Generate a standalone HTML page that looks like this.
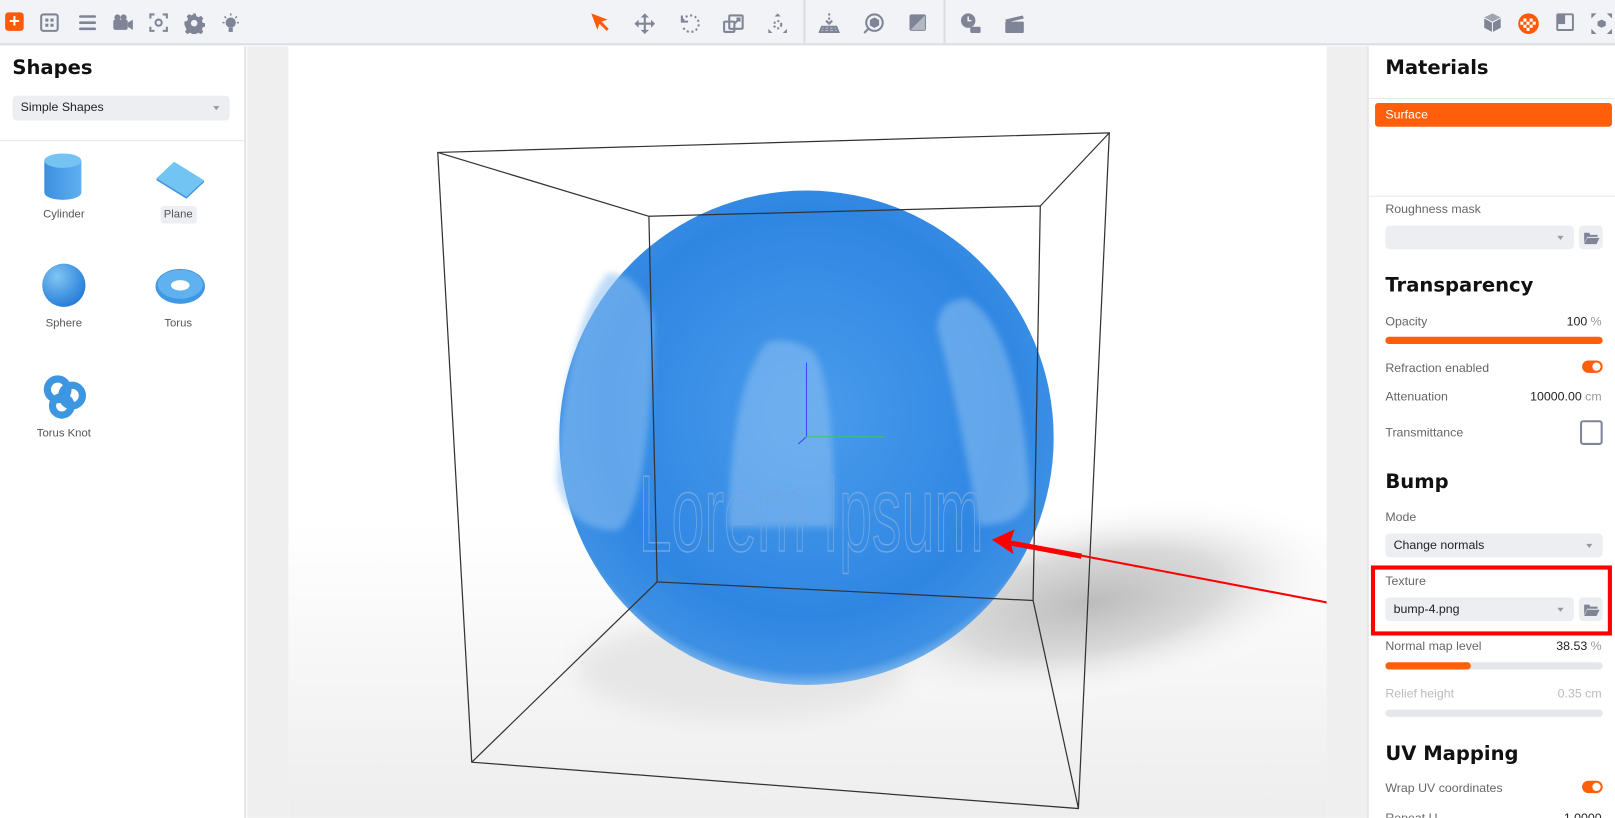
<!DOCTYPE html>
<html><head><meta charset="utf-8"><style>
*{box-sizing:border-box;margin:0;padding:0}
html,body{width:1615px;height:817px;overflow:hidden;background:#fff}
body{font-family:"Liberation Sans",sans-serif;color:#222}
#w{position:absolute;left:0;top:0;width:1568px;height:794px;transform:scale(1.03);transform-origin:0 0;overflow:hidden}
.tb{position:absolute;left:0;top:0;width:1568px;height:44px;background:#f2f3f6;border-bottom:2px solid #dcdde1}
.ic{position:absolute;top:12px}
.abs{position:absolute}
.h{font-family:"DejaVu Sans","Liberation Sans",sans-serif;font-weight:bold;font-size:19px;color:#111;position:absolute}
.lbl{position:absolute;font-size:12px;color:#666}
.val{position:absolute;font-size:12px;color:#222;right:13px}
.sel{position:absolute;background:#eceef2;border-radius:4px;font-size:12px;color:#222;padding-left:8px}
.sel:after{content:"";position:absolute;right:10px;top:10px;border:3px solid transparent;border-top:4px solid #999}
.fold{position:absolute;background:#eceef2;border-radius:4px;width:23px;height:23px}
.bar{position:absolute;left:1345px;width:211px;height:7px;border-radius:4px;background:#e4e6ea}
.tog{position:absolute;left:1536px;width:20px;height:12px;border-radius:6px;background:#ff5f0a}
.tog:after{content:"";position:absolute;right:2px;top:2px;width:8px;height:8px;border-radius:50%;background:#fff}
.shape{position:absolute;font-size:11px;color:#555;text-align:center;width:80px}
</style></head><body><div id="w">
<div class="tb"></div>
<div class="abs" style="left:5px;top:12px;width:18px;height:18px;background:#ff5a0a;border-radius:3px;color:#fff;font-size:18px;line-height:17px;text-align:center;font-weight:bold">+</div>
<svg class="ic" style="left:38px" width="20" height="20" viewBox="0 0 20 20" fill="none" stroke="#7f8596" stroke-width="2"><rect x="2" y="2" width="16" height="16" rx="2"/><rect x="6" y="6" width="3" height="3" fill="#7f8596" stroke="none"/><rect x="11" y="6" width="3" height="3" fill="#7f8596" stroke="none"/><rect x="6" y="11" width="3" height="3" fill="#7f8596" stroke="none"/><rect x="11" y="11" width="3" height="3" fill="#7f8596" stroke="none"/></svg>
<svg class="ic" style="left:75px" width="20" height="20" viewBox="0 0 20 20" stroke="#7f8596" stroke-width="2.5" stroke-linecap="round"><path d="M3 4h14M3 10h14M3 16h14"/></svg>
<svg class="ic" style="left:108px" width="22" height="20" viewBox="0 0 22 20" fill="#7f8596"><circle cx="6" cy="5" r="3"/><circle cx="12" cy="5" r="3"/><rect x="2" y="7" width="14" height="10" rx="2"/><path d="M16 10l5-3v10l-5-3z"/></svg>
<svg class="ic" style="left:144px" width="20" height="20" viewBox="0 0 20 20" fill="none" stroke="#7f8596" stroke-width="2"><path d="M2 6V2h4M14 2h4v4M18 14v4h-4M6 18H2v-4"/><circle cx="10" cy="10" r="3"/></svg>
<svg class="ic" style="left:178px" width="21" height="21" viewBox="0 0 20 20" fill="#7f8596"><path d="M8.5 1h3l.5 2.5 2 1 2.3-1.2 2.1 2.1-1.2 2.3.8 2 2.5.5v3l-2.5.5-.8 2 1.2 2.3-2.1 2.1-2.3-1.2-2 .8-.5 2.5h-3l-.5-2.5-2-.8-2.3 1.2-2.1-2.1 1.2-2.3-.8-2L1 11.5v-3l2.5-.5.8-2-1.2-2.3 2.1-2.1 2.3 1.2 2-1z"/><circle cx="10" cy="10" r="3" fill="#f2f3f6"/></svg>
<svg class="ic" style="left:213px" width="22" height="22" viewBox="0 0 22 22" fill="#7f8596"><circle cx="11" cy="10" r="5"/><rect x="9" y="15" width="4" height="4"/><path d="M11 1v2M3 10h2M17 10h2M5 4l1.5 1.5M17 4l-1.5 1.5" stroke="#7f8596" stroke-width="1.5"/></svg>
<svg class="ic" style="left:573px" width="20" height="20" viewBox="0 0 20 20" fill="#ff5a0a"><path d="M1 1l16 6-6 2 7 7-2 2-7-7-2 6z"/></svg>
<svg class="ic" style="left:615px" width="22" height="22" viewBox="0 0 22 22" fill="#7f8596"><path d="M11 1l4 4h-3v5h5V7l4 4-4 4v-3h-5v5h3l-4 4-4-4h3v-5H5v3l-4-4 4-4v3h5V5H7z"/></svg>
<svg class="ic" style="left:659px" width="22" height="22" viewBox="0 0 22 22" fill="none" stroke="#7f8596" stroke-width="2" stroke-dasharray="2 2.5"><path d="M4 8a8 8 0 1 1 0 6"/><path d="M3 3v6h6" stroke-dasharray="none"/></svg>
<svg class="ic" style="left:701px" width="22" height="22" viewBox="0 0 22 22" fill="none" stroke="#7f8596" stroke-width="2"><rect x="2" y="9" width="10" height="10" rx="1"/><rect x="7" y="3" width="13" height="13" rx="1"/><path d="M12 11l5-5M14 6h3v3"/></svg>
<svg class="ic" style="left:744px" width="22" height="22" viewBox="0 0 22 22" fill="#7f8596"><path d="M11 1l3 3h-6zM2 20v-4l4 4zM20 20v-4l-4 4z"/><circle cx="11" cy="12" r="3.5" fill="none" stroke="#7f8596" stroke-width="2" stroke-dasharray="2 2"/></svg>
<div class="abs" style="left:780px;top:0;width:2px;height:43px;background:#dcdde1"></div>
<svg class="ic" style="left:794px" width="22" height="22" viewBox="0 0 22 22" fill="none" stroke="#7f8596" stroke-width="2"><path d="M11 1v9" stroke-dasharray="2 2"/><path d="M8 8l3 3 3-3"/><path d="M4 14h14l2 5H2zM7 14l-1 5M11 14v5M15 14l1 5M3 16.5h16"/></svg>
<svg class="ic" style="left:837px" width="22" height="22" viewBox="0 0 22 22" fill="none" stroke="#7f8596" stroke-width="2"><circle cx="12" cy="10" r="8"/><path d="M6 16l-4 4"/><path d="M12 6l3.5 2v4L12 14l-3.5-2V8z" fill="#7f8596"/></svg>
<svg class="ic" style="left:881px" width="20" height="20" viewBox="0 0 20 20"><rect x="2" y="2" width="16" height="16" rx="2" fill="#7f8596"/><path d="M17 3L3 17h14z" fill="#b4b8c3"/></svg>
<div class="abs" style="left:916px;top:0;width:2px;height:43px;background:#dcdde1"></div>
<svg class="ic" style="left:932px" width="22" height="22" viewBox="0 0 22 22" fill="#7f8596"><circle cx="8" cy="8" r="7"/><path d="M8 4v4h3" stroke="#f2f3f6" stroke-width="1.5" fill="none"/><rect x="10" y="14" width="10" height="6" rx="1"/></svg>
<svg class="ic" style="left:974px" width="22" height="22" viewBox="0 0 22 22" fill="#7f8596"><path d="M2 7l17-4 1 3-17 4z"/><rect x="2" y="9" width="18" height="11" rx="1"/></svg>
<svg class="ic" style="left:1439px" width="20" height="20" viewBox="0 0 20 20" fill="#7f8596"><path d="M10 1l8 4-8 4-8-4z" fill="#a0a5b2"/><path d="M2 6l7.5 4v9L2 15zM18 6l-7.5 4v9L18 15z"/></svg>
<svg class="ic" style="left:1473px" width="22" height="22" viewBox="0 0 22 22"><circle cx="11" cy="11" r="10" fill="#ff5a0a"/><g fill="#fff"><rect x="6" y="6" width="3" height="3"/><rect x="12" y="6" width="3" height="3"/><rect x="9" y="9" width="3" height="3"/><rect x="15" y="9" width="3" height="3"/><rect x="6" y="12" width="3" height="3"/><rect x="12" y="12" width="3" height="3"/><rect x="9" y="15" width="3" height="3"/><rect x="3" y="9" width="3" height="3"/></g></svg>
<svg class="ic" style="left:1510px" width="19" height="19" viewBox="0 0 20 20" fill="none" stroke="#7f8596" stroke-width="2"><rect x="2" y="2" width="16" height="16" rx="1"/><rect x="2" y="2" width="8" height="10" fill="#7f8596" stroke="none"/></svg>
<svg class="ic" style="left:1544px" width="22" height="22" viewBox="0 0 22 22" fill="#7f8596"><path d="M1 1h5L1 6zM21 1h-5l5 5zM1 21h5l-5-5zM21 21h-5l5-5z"/><path d="M11 7l4 2v4l-4 2-4-2V9z"/></svg>
<div class="abs" style="left:0;top:45px;width:239px;height:772px;background:#fff;border-right:2px solid #e4e5e8"></div>
<div class="h" style="left:12px;top:55px">Shapes</div>
<div class="sel" style="left:12px;top:93px;width:211px;height:24px;line-height:22px">Simple Shapes</div>
<div class="abs" style="left:0;top:136px;width:238px;height:1px;background:#e6e7ea"></div>
<svg class="abs" style="left:40px;top:148px" width="42" height="48" viewBox="0 0 42 48"><defs><linearGradient id="cy" x1="0" x2="1"><stop offset="0" stop-color="#3b90e0"/><stop offset="1" stop-color="#5fb0ef"/></linearGradient></defs><path d="M3 8v31a18 7 0 0 0 36 0V8z" fill="url(#cy)"/><ellipse cx="21" cy="8" rx="18" ry="7" fill="#74c3f3"/></svg>
<div class="shape" style="left:22px;top:202px">Cylinder</div>
<svg class="abs" style="left:150px;top:155px" width="50" height="38"><path d="M2 18L19 2l29 18-17 16z" fill="#72c4f2"/><path d="M2 18l29 18v2L2 20z" fill="#3f95e0"/><path d="M31 36l17-16v2L31 38z" fill="#3f95e0"/></svg>
<div class="abs" style="left:156px;top:200px;width:35px;height:17px;background:#eceef2;border-radius:3px"></div>
<div class="shape" style="left:133px;top:202px">Plane</div>
<svg class="abs" style="left:40px;top:255px" width="45" height="45"><defs><radialGradient id="sp" cx=".35" cy=".3" r=".7"><stop offset="0" stop-color="#7fc6f4"/><stop offset="1" stop-color="#2a7fd8"/></radialGradient></defs><circle cx="22" cy="22" r="21" fill="url(#sp)"/></svg>
<div class="shape" style="left:22px;top:308px">Sphere</div>
<svg class="abs" style="left:150px;top:260px" width="50" height="38"><ellipse cx="25" cy="18" rx="24" ry="17" fill="#3f98e3"/><ellipse cx="25" cy="16" rx="22" ry="14" fill="#5fb2ef"/><ellipse cx="25" cy="17" rx="9" ry="5" fill="#fff"/></svg>
<div class="shape" style="left:133px;top:308px">Torus</div>
<svg class="abs" style="left:40px;top:362px" width="46" height="46" fill="none" stroke="#3d96e2" stroke-width="7"><circle cx="16" cy="16" r="10"/><circle cx="30" cy="22" r="10"/><circle cx="20" cy="32" r="9"/></svg>
<div class="shape" style="left:22px;top:415px">Torus Knot</div>
<div class="abs" style="left:240px;top:45px;width:40px;height:772px;background:#efeff0"></div>
<div class="abs" style="left:1288px;top:45px;width:40px;height:772px;background:#efeff0"></div>
<svg class="abs" style="left:280px;top:45px" width="1008" height="772" viewBox="280 45 1008 772">
<defs>
<radialGradient id="sh" cx=".5" cy=".5" r=".5"><stop offset="0" stop-color="#bcbcbc"/><stop offset=".5" stop-color="#dadada"/><stop offset="1" stop-color="#fff" stop-opacity="0"/></radialGradient>
<radialGradient id="ball" cx=".5" cy=".45" r=".55"><stop offset="0" stop-color="#4a9cec"/><stop offset=".75" stop-color="#2f86e2"/><stop offset=".95" stop-color="#3d90e4"/><stop offset="1" stop-color="#7ab4ec"/></radialGradient>
<linearGradient id="fl" x1="0" y1="0" x2="0" y2="1"><stop offset="0" stop-color="#fff"/><stop offset=".6" stop-color="#fff"/><stop offset="1" stop-color="#ececec"/></linearGradient>
<filter id="bl"><feGaussianBlur stdDeviation="12"/></filter>
<filter id="bl2"><feGaussianBlur stdDeviation="3"/></filter>
</defs>
<rect x="280" y="45" width="1008" height="772" fill="url(#fl)"/>
<ellipse cx="1060" cy="585" rx="255" ry="95" fill="url(#sh)" transform="rotate(-10 1060 585)"/>
<ellipse cx="720" cy="650" rx="160" ry="50" fill="#e6e6e6" filter="url(#bl)"/>
<circle cx="783" cy="425" r="240" fill="url(#ball)"/>
<g filter="url(#bl2)" fill="#8cc0f2" opacity=".55">
<path d="M590 265 q-40 50-50 200 q10 50 60 50 q30-20 35-200 q-10-50-45-50z"/>
<path d="M940 290 q50 30 60 190 q-5 30-50 30 q-20-120-40-190 q0-30 30-30z"/>
<path d="M745 332 q-35 40-38 180 h103 q0-140-20-170 q-20-15-45-10z"/>
</g>
<text x="620" y="535" font-family="Liberation Sans" font-size="105" fill="none" stroke="#6fa6e2" stroke-width="1.5" textLength="335" lengthAdjust="spacingAndGlyphs">Lorem Ipsum</text>
<g fill="none" stroke="#333" stroke-width="1.2">
<path d="M425 148L1077 129L1047 785L458 740Z"/>
<path d="M630 210L1010 200L1003 583L638 565Z"/>
<path d="M425 148L630 210M1077 129L1010 200M1047 785L1003 583M458 740L638 565"/>
</g>
<path d="M783 352v72M783 424l-8 7" stroke="#44f" stroke-width="1"/>
<path d="M783 424h75" stroke="#3c6" stroke-width="1"/>
<path d="M1315 590L990 528" stroke="#f00" stroke-width="2"/>
<path d="M1050 540L980 527" stroke="#f00" stroke-width="5"/>
<path d="M963 524l22-10-4 12 3 12z" fill="#f00"/>
</svg>
<div class="abs" style="left:1327px;top:45px;width:2px;height:772px;background:#e4e5e8"></div>
<div class="abs" style="left:1329px;top:45px;width:239px;height:772px;background:#fff"></div>
<div class="h" style="left:1345px;top:55px">Materials</div>
<div class="abs" style="left:1329px;top:95px;width:286px;height:1px;background:#e6e7ea"></div>
<div class="abs" style="left:1335px;top:100px;width:230px;height:23px;background:#ff5f0a;border-radius:3px;color:#fff;font-size:12px;line-height:22px;padding-left:10px">Surface</div>
<div class="abs" style="left:1329px;top:190px;width:286px;height:1px;background:#e6e7ea"></div>
<div class="lbl" style="left:1345px;top:196px">Roughness mask</div>
<div class="sel" style="left:1345px;top:219px;width:183px;height:23px"></div>
<div class="fold" style="left:1533px;top:219px"><svg width="23" height="23"><path d="M5 7h5l1 2h7v2H8l-3 6z M8 12h12l-3 6H5z" fill="#7f8596"/></svg></div>
<div class="h" style="left:1345px;top:266px">Transparency</div>
<div class="lbl" style="left:1345px;top:305px">Opacity</div>
<div class="val" style="top:305px">100 <span style="color:#999">%</span></div>
<div class="bar" style="top:327px;background:#ff5f0a"></div>
<div class="lbl" style="left:1345px;top:350px">Refraction enabled</div>
<div class="tog" style="top:350px"></div>
<div class="lbl" style="left:1345px;top:378px">Attenuation</div>
<div class="val" style="top:378px">10000.00 <span style="color:#999">cm</span></div>
<div class="lbl" style="left:1345px;top:413px">Transmittance</div>
<div class="abs" style="left:1534px;top:408px;width:22px;height:24px;border:2px solid #7f8596;border-radius:3px"></div>
<div class="h" style="left:1345px;top:457px">Bump</div>
<div class="lbl" style="left:1345px;top:495px">Mode</div>
<div class="sel" style="left:1345px;top:518px;width:211px;height:23px;line-height:23px">Change normals</div>
<div class="abs" style="left:1331px;top:549px;width:234px;height:68px;border:4px solid #f00"></div>
<div class="lbl" style="left:1345px;top:557px">Texture</div>
<div class="sel" style="left:1345px;top:580px;width:183px;height:23px;line-height:23px">bump-4.png</div>
<div class="fold" style="left:1533px;top:580px"><svg width="23" height="23"><path d="M5 7h5l1 2h7v2H8l-3 6z M8 12h12l-3 6H5z" fill="#7f8596"/></svg></div>
<div class="lbl" style="left:1345px;top:620px">Normal map level</div>
<div class="val" style="top:620px">38.53 <span style="color:#999">%</span></div>
<div class="bar" style="top:643px"></div>
<div class="bar" style="top:643px;width:83px;background:#ff5f0a"></div>
<div class="lbl" style="left:1345px;top:666px;color:#bbb">Relief height</div>
<div class="val" style="top:666px;color:#bbb">0.35 cm</div>
<div class="bar" style="top:689px"></div>
<div class="h" style="left:1345px;top:721px">UV Mapping</div>
<div class="lbl" style="left:1345px;top:758px">Wrap UV coordinates</div>
<div class="tog" style="top:758px"></div>
<div class="lbl" style="left:1345px;top:787px">Repeat U</div>
<div class="val" style="top:787px">1.0000</div>
</div></body></html>
